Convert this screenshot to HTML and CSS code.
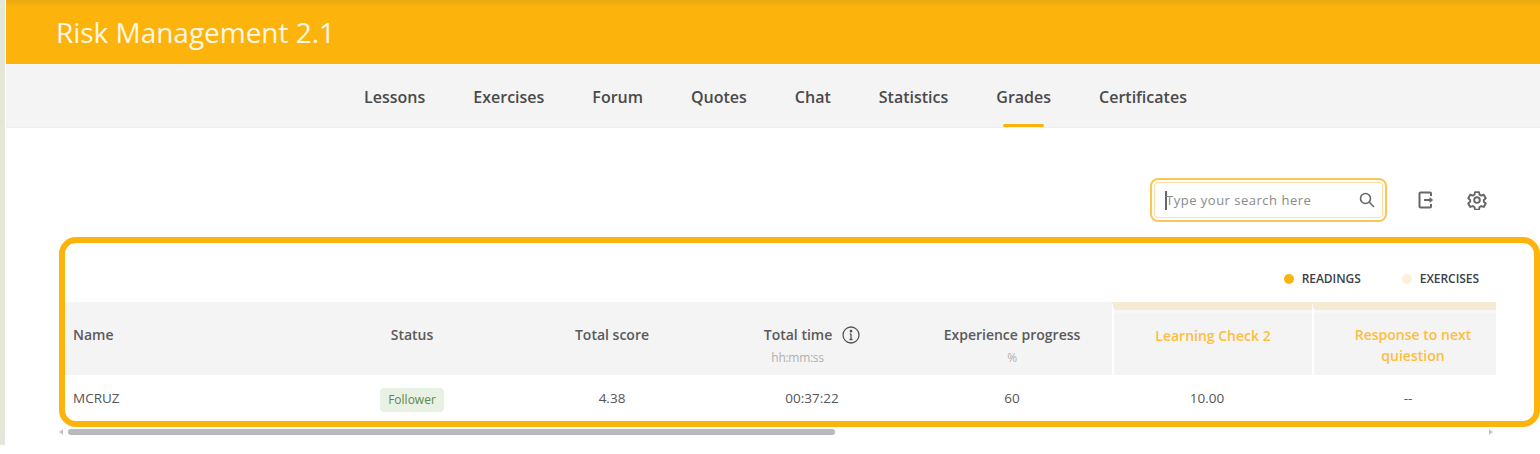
FILE: index.html
```html
<!DOCTYPE html>
<html lang="en">
<head>
<meta charset="utf-8">
<title>Risk Management 2.1</title>
<link rel="stylesheet" href="styles.css">
</head>
<body>
<div class="strip"></div>
<div class="page">
  <header class="hero"><h1>Risk Management 2.1</h1></header>
  <nav class="tabs">
    <a>Lessons</a><a>Exercises</a><a>Forum</a><a>Quotes</a><a>Chat</a><a>Statistics</a><a class="active">Grades</a><a>Certificates</a>
  </nav>
  <main class="content">
    <div class="tools">
      <div class="search">
        <div class="search-inner">
          <span class="caret"></span><span class="placeholder">Type your search here</span>
          <svg class="ico-search" width="18" height="18" viewBox="0 0 18 18" fill="none" stroke="#666" stroke-width="1.6"><circle cx="7.5" cy="7.5" r="5"/><path d="M11.3 11.3L16 16"/></svg>
        </div>
      </div>
      <svg class="tool" width="18" height="20" viewBox="1.5 0 18 20" fill="none" stroke="#666" stroke-width="2" stroke-linejoin="round"><path d="M14.500 6V3.500a1 1 0 0 0-1-1h-9.500a1 1 0 0 0-1 1v13a1 1 0 0 0 1 1h9.500a1 1 0 0 0 1-1v-2.500"/><path d="M7.500 10h6"/><path d="M13.500 7.800l2.500 2.200-2.500 2.200z" fill="#666" stroke-width="1"/></svg>
      <svg class="tool gear" width="20" height="20" viewBox="0 0 24 24" fill="none" stroke="#666" stroke-width="2.300" stroke-linejoin="round"><path d="M9.600 2.500h4.800l.6 3 2.200 1.200 2.900-1 2.400 4.200-2.300 2v2.200l2.300 2-2.400 4.200-2.900-1-2.200 1.200-.6 3H9.600l-.6-3-2.200-1.200-2.900 1-2.400-4.200 2.300-2v-2.200l-2.300-2 2.400-4.200 2.900 1L9 5.500z"/><circle cx="12" cy="12" r="3.400"/></svg>
    </div>
    <section class="panel">
      <div class="legend">
        <span class="key"><i class="dot dot-read"></i>READINGS</span>
        <span class="key"><i class="dot dot-ex"></i>EXERCISES</span>
      </div>
      <div class="grid">
        <div class="th th-name">Name</div>
        <div class="th th-plain">Status</div>
        <div class="th th-plain">Total score</div>
        <div class="th th-sub"><div class="time-line"><span>Total time</span>
          <svg width="18" height="18" viewBox="0 0 18 18" fill="none" stroke="#555" stroke-width="1.300"><circle cx="9" cy="9" r="8"/><path d="M9 8v5.500M7.500 13.500h3M7.800 8H9"/><circle cx="9" cy="5.200" r=".7" fill="#555"/></svg></div>
          <small class="small-time">hh:mm:ss</small></div>
        <div class="th th-sub"><div class="sub-title">Experience progress</div><small>%</small></div>
        <div class="th th-ex">Learning Check 2</div>
        <div class="th th-ex th-last">Response to next quiestion</div>

        <div class="td td-name">MCRUZ</div>
        <div class="td"><span class="badge">Follower</span></div>
        <div class="td">4.38</div>
        <div class="td">00:37:22</div>
        <div class="td">60</div>
        <div class="td td-lc">10.00</div>
        <div class="td td-last">--</div>
      </div>
    </section>
    <div class="scroll">
      <span class="arrow arrow-l"></span>
      <div class="track"><div class="thumb"></div></div>
      <span class="arrow arrow-r"></span>
    </div>
  </main>
</div>
</body>
</html>
```
FILE: styles.css
```css
* { box-sizing: border-box; }
html, body { margin: 0; padding: 0; height: 454px; overflow: hidden; }
body {
  display: flex;
  background: #fff;
  font-family: "Open Sans", "Liberation Sans", sans-serif;
  color: #444;
  font-size: 12px;
}
.strip { width: 5px; height: 445px; background: #e3e7da; flex: none; }
.page { flex: 1; min-width: 0; padding-left: 1px; }

.hero {
  height: 64px;
  background: linear-gradient(#e8a90f 0, #fcb30c 7px);
  padding: 0 0 0 50px;
  display: flex;
  align-items: center;
}
.hero h1 { margin: 0; font-size: 28px; font-weight: 400; color: #fff7e6; letter-spacing: -.03px; }

.tabs {
  height: 64px;
  background: #f4f4f4;
  border-bottom: 1px solid #eeeeee;
  display: flex;
  justify-content: center;
  gap: 48px;
  padding-left: 5px;
}
.tabs a {
  position: relative;
  font-size: 16px;
  font-weight: 600;
  color: #4a4a4a;
  padding-top: 22px;
  line-height: 22px;
}
.tabs .active::after {
  content: "";
  position: absolute;
  left: 7px; right: 7px; bottom: 0;
  height: 3px;
  border-radius: 2px;
  background: #fcb30c;
}

.content { padding: 50px 0 0 53px; }
.tools { height: 44px; display: flex; align-items: center; justify-content: flex-end; padding-right: 53px; }
.search {
  width: 237px;
  height: 44px;
  border: 2px solid #fdc458;
  border-radius: 8px;
  padding: 2px;
  margin-right: 31px;
}
.search-inner {
  height: 100%;
  border: 1px solid #fedc9c;
  border-radius: 4px;
  display: flex;
  align-items: center;
  padding: 0 6px 0 10px;
}
.caret { width: 2px; height: 19px; background: #666; flex: none; }
.placeholder { flex: 1; font-size: 13px; color: #8a8a8a; margin-left: -1px; letter-spacing: .5px; white-space: nowrap; }
.ico-search { flex: none; }
.tool { flex: none; }
.gear { margin-left: 31px; }

.panel {
  margin: 15px 0 0 0;
  width: 1481px;
  height: 190px;
  border: 6px solid #fcb30c;
  border-radius: 17px;
  overflow: hidden;
}
.legend {
  height: 59px;
  display: flex;
  justify-content: flex-end;
  align-items: center;
  gap: 41px;
  padding: 12px 55px 0 0;
  font-size: 12px;
  font-weight: 600;
  color: #3a3f4a;
  letter-spacing: -.05px;
}
.key { display: flex; align-items: center; gap: 8px; }
.dot { width: 10px; height: 10px; border-radius: 50%; }
.dot-read { background: #fcb30c; }
.dot-ex { background: #fdf0d8; }

.grid {
  display: grid;
  grid-template-columns: 247px 200px 200px 200px 200px 200px 184px;
  grid-template-rows: 73px 46px;
  width: 1431px;
  text-align: center;
}
.th {
  background: #f4f4f4;
  font-weight: 600;
  font-size: 14px;
  color: #5a5a5a;
  display: flex;
  flex-direction: column;
  align-items: center;
}
.th-plain, .th-name { justify-content: center; padding-bottom: 9px; }
.th-name { align-items: flex-start; padding-left: 8px; }
.th-sub { padding-top: 23px; }
.th small { font-size: 12px; font-weight: 400; color: #b0b0b0; margin-top: 5px; letter-spacing: -.3px; }
.small-time { margin-right: 29px; }
.time-line { display: flex; align-items: center; gap: 10px; height: 19px; }
.th-ex {
  color: #fdbe3d;
  font-weight: 600;
  border-top: 8px solid #f6ebd2;
  border-left: 2px solid #fff;
  justify-content: center;
  padding: 0 24px 15px;
  line-height: 21px;
  box-shadow: inset 0 3px 0 #f7f7f7;
}
.th-last { padding: 5px 8px 0 24px; }

.td {
  display: flex;
  align-items: center;
  justify-content: center;
  font-size: 13.5px;
  color: #555;
}
.td-name { justify-content: flex-start; padding: 0 0 0 8px; }
.td-lc { padding-right: 10px; }
.td-last { padding-left: 8px; }
.badge {
  background: #e9f1e4;
  color: #5b8a48;
  font-size: 12px;
  padding: 0 8.5px;
  line-height: 24px;
  border-radius: 4px;
  margin-top: 4px;
}

.scroll { display: flex; align-items: center; height: 7px; width: 1434px; margin: 1px 0 0 0; gap: 5px; }
.arrow { width: 0; height: 0; border-top: 3px solid transparent; border-bottom: 3px solid transparent; flex: none; }
.arrow-l { border-right: 4px solid #c4c4c8; }
.arrow-r { border-left: 4px solid #c4c4c8; }
.track { flex: 1; height: 6px; }
.thumb { width: 767px; height: 100%; background: #b8b8bd; border-radius: 3px; }
```
